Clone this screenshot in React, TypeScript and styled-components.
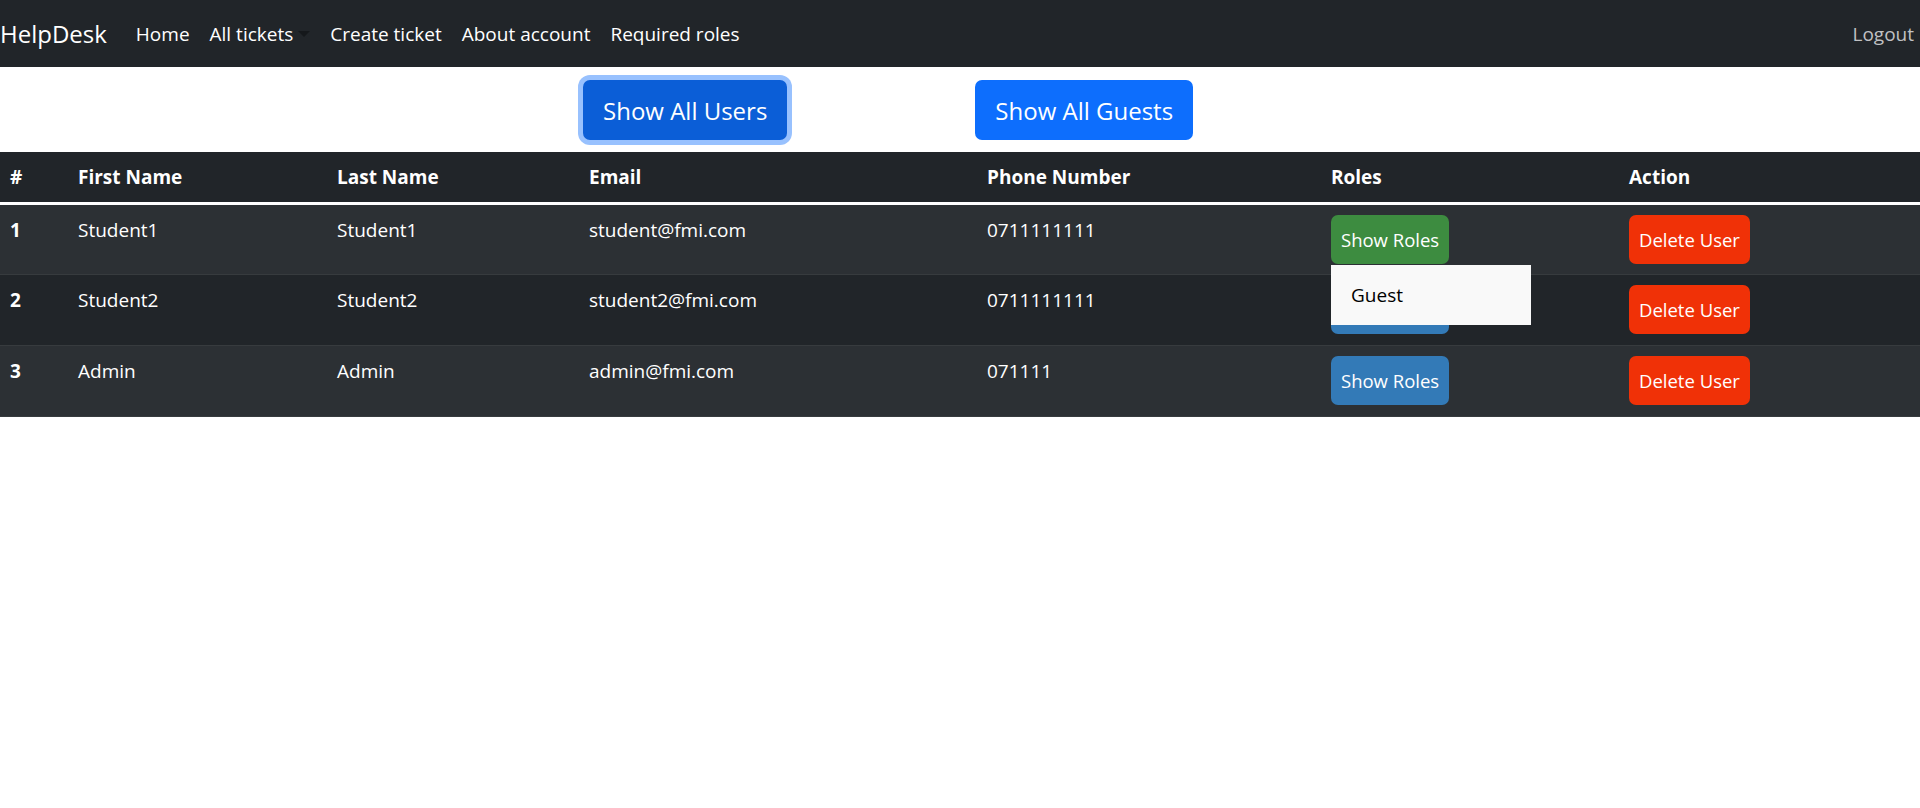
import React from "react";
import styled, { createGlobalStyle } from "styled-components";

const GlobalStyle = createGlobalStyle`
  html, body {
    margin: 0;
    padding: 0;
    background: #ffffff;
    font-family: "Open Sans", "Noto Sans", "Liberation Sans", sans-serif;
  }
  * {
    box-sizing: border-box;
  }
`;

type User = {
  id: number;
  firstName: string;
  lastName: string;
  email: string;
  phone: string;
  roles: string[];
};

const users: User[] = [
  { id: 1, firstName: "Student1", lastName: "Student1", email: "student@fmi.com", phone: "0711111111", roles: ["Guest"] },
  { id: 2, firstName: "Student2", lastName: "Student2", email: "student2@fmi.com", phone: "0711111111", roles: ["Guest"] },
  { id: 3, firstName: "Admin", lastName: "Admin", email: "admin@fmi.com", phone: "071111", roles: ["Admin"] },
];

const columns = [
  { title: "#", width: 68 },
  { title: "First Name", width: 259 },
  { title: "Last Name", width: 252 },
  { title: "Email", width: 398 },
  { title: "Phone Number", width: 344 },
  { title: "Roles", width: 298 },
  { title: "Action", width: 301 },
];

export default function App() {
  const openRoles = 1;
  return (
    <>
      <GlobalStyle />
      <Navbar>
        <Brand>HelpDesk</Brand>
        <NavLinks>
          <NavLink>Home</NavLink>
          <NavLink>
            All tickets
            <Caret />
          </NavLink>
          <NavLink>Create ticket</NavLink>
          <NavLink>About account</NavLink>
          <NavLink>Required roles</NavLink>
        </NavLinks>
        <Logout>Logout</Logout>
      </Navbar>

      <Toolbar>
        <BigButton $focused>Show All Users</BigButton>
        <BigButton>Show All Guests</BigButton>
      </Toolbar>

      <Table>
        <colgroup>
          {columns.map((c) => (
            <col key={c.title} style={{ width: c.width }} />
          ))}
        </colgroup>
        <thead>
          <tr>
            {columns.map((c) => (
              <HeadCell key={c.title}>{c.title}</HeadCell>
            ))}
          </tr>
        </thead>
        <tbody>
          {users.map((u, i) => (
            <Row key={u.id} $striped={i % 2 === 0}>
              <IdCell>{u.id}</IdCell>
              <Cell>{u.firstName}</Cell>
              <Cell>{u.lastName}</Cell>
              <Cell>{u.email}</Cell>
              <Cell>{u.phone}</Cell>
              <Cell>
                <RolesWrap>
                  <SmallButton $variant={u.id === openRoles ? "success" : "primary"}>
                    Show Roles
                  </SmallButton>
                  {u.id === openRoles && (
                    <RolesMenu>
                      {u.roles.map((r) => (
                        <RoleItem key={r}>{r}</RoleItem>
                      ))}
                    </RolesMenu>
                  )}
                </RolesWrap>
              </Cell>
              <Cell>
                <SmallButton $variant="danger">Delete User</SmallButton>
              </Cell>
            </Row>
          ))}
        </tbody>
      </Table>
    </>
  );
}

const Navbar = styled.nav`
  height: 67px;
  background: #212529;
  display: flex;
  align-items: center;
  padding-right: 6px;
`;

const Brand = styled.div`
  font-size: 24px;
  color: #ffffff;
  margin-right: 19px;
  line-height: 1;
`;

const NavLinks = styled.div`
  display: flex;
  align-items: center;
  flex: 1;
`;

const NavLink = styled.div`
  font-size: 19px;
  color: #ffffff;
  padding: 0 10px;
  display: flex;
  align-items: center;
`;

const Caret = styled.span`
  display: inline-block;
  margin-left: 5px;
  width: 0;
  height: 0;
  border-top: 6px solid #15181b;
  border-left: 6px solid transparent;
  border-right: 6px solid transparent;
`;

const Logout = styled.div`
  font-size: 19px;
  color: #c0c1c3;
`;

const Toolbar = styled.div`
  display: flex;
  gap: 188px;
  padding: 13px 0 12px 583px;
`;

const BigButton = styled.button<{ $focused?: boolean }>`
  height: 60px;
  padding: 0 20px;
  border: none;
  border-radius: 7px;
  font-family: inherit;
  font-size: 24px;
  color: #ffffff;
  background: ${(p) => (p.$focused ? "#0b5ed7" : "#0d6efd")};
  box-shadow: ${(p) => (p.$focused ? "0 0 0 5px #98c1fe" : "none")};
`;

const Table = styled.table`
  width: 1920px;
  border-collapse: collapse;
  table-layout: fixed;
  color: #ffffff;
`;

const HeadCell = styled.th`
  background: #212529;
  text-align: left;
  font-size: 19px;
  font-weight: 700;
  height: 51px;
  padding: 0 10px;
  border-bottom: 3px solid #ffffff;
`;

const Row = styled.tr<{ $striped: boolean }>`
  background: ${(p) => (p.$striped ? "#2c3034" : "#212529")};
  border-bottom: 1px solid #373b3e;
`;

const Cell = styled.td`
  height: 71px;
  padding: 10px;
  vertical-align: top;
  font-size: 19px;
  line-height: 30px;
`;

const IdCell = styled(Cell)`
  font-weight: 700;
`;

const RolesWrap = styled.div`
  position: relative;
  display: inline-block;
`;

const variants = {
  primary: "#337ab7",
  success: "#3d8c40",
  danger: "#f03107",
};

const SmallButton = styled.button<{ $variant: keyof typeof variants }>`
  height: 49px;
  padding: 0 10px;
  border: none;
  border-radius: 7px;
  font-family: inherit;
  font-size: 18.5px;
  color: #ffffff;
  background: ${(p) => variants[p.$variant]};
  display: block;
`;

const RolesMenu = styled.div`
  position: absolute;
  top: 50px;
  left: 0;
  width: 200px;
  height: 60px;
  background: #f9f9f9;
  z-index: 2;
  display: flex;
  align-items: center;
`;

const RoleItem = styled.div`
  padding-left: 20px;
  font-size: 19px;
  color: #000000;
`;
